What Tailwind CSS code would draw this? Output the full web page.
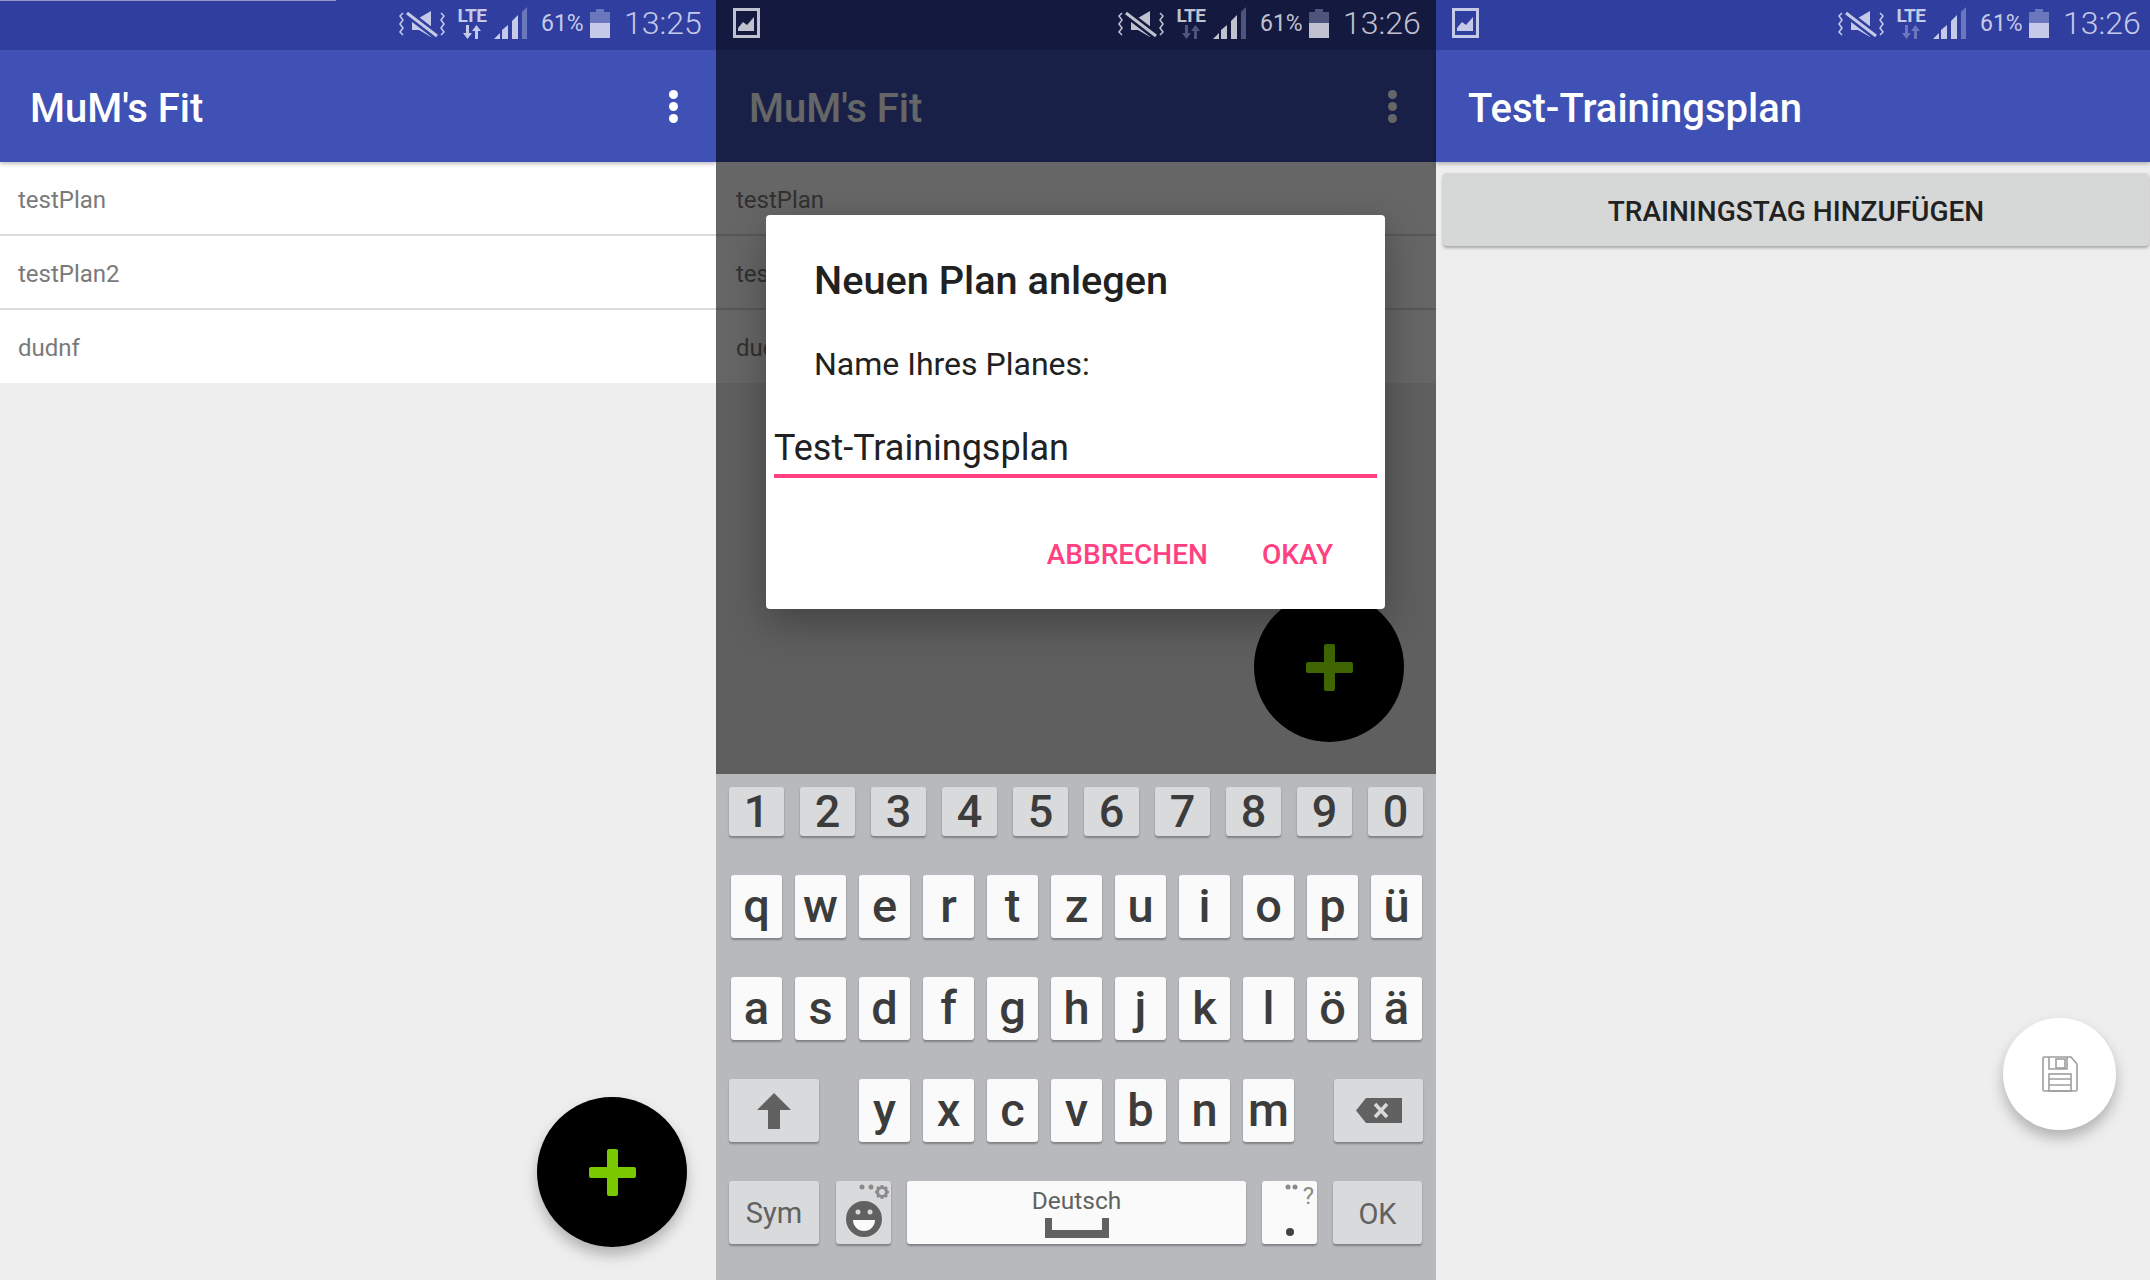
<!DOCTYPE html>
<html lang="en">
<head>
  <meta charset="UTF-8" />
  <title>MuM's Fit</title>
  <script src="https://cdn.jsdelivr.net/npm/@tailwindcss/browser@4"></script>
</head>
<body class="font-['Roboto',sans-serif] bg-[#eeeeee]">
<div class="flex w-[2150px] h-[1280px] overflow-hidden">

  <!-- Screen 1: plan list -->
  <section class="relative flex flex-col w-[716px] shrink-0 bg-[#eeeeee]">
    <div class="absolute top-0 left-0 w-[336px] h-px bg-[#8f97c9]"></div>
    <div data-status data-time="13:25" data-bg="#303f9f" data-arrows="#c5cae9" class="flex items-center justify-end h-[50px] pb-[4px] pr-[14px] bg-[#303f9f] text-[#c5cae9]"></div>
    <header class="relative flex items-center justify-between h-[112px] pl-[30px] pr-[38px] bg-[#3f51b5] shadow-[0_2px_4px_rgba(0,0,0,0.25)]">
      <h1 class="pt-[6px] text-[40px] font-medium text-white leading-none">MuM's Fit</h1>
      <div class="flex flex-col gap-[3px]">
        <span class="w-[9px] h-[9px] rounded-full bg-white"></span>
        <span class="w-[9px] h-[9px] rounded-full bg-white"></span>
        <span class="w-[9px] h-[9px] rounded-full bg-white"></span>
      </div>
    </header>
    <ul class="text-[24px] text-[#7a7a7a] bg-white">
      <li class="flex items-center h-[74px] pt-[4px] pl-[18px] border-b-2 border-[#dcdcdc]">testPlan</li>
      <li class="flex items-center h-[74px] pt-[4px] pl-[18px] border-b-2 border-[#dcdcdc]">testPlan2</li>
      <li class="flex items-center h-[73px] pt-[2px] pl-[18px]">dudnf</li>
    </ul>
    <button class="absolute left-[537px] top-[1097px] flex items-center justify-center w-[150px] h-[150px] rounded-full bg-black shadow-[0_8px_14px_rgba(0,0,0,0.25)]">
      <svg width="47" height="47" viewBox="0 0 47 47"><path fill="#7ac800" d="M18 2a2 2 0 0 1 2-2h7a2 2 0 0 1 2 2v16h16a2 2 0 0 1 2 2v7a2 2 0 0 1-2 2H29v16a2 2 0 0 1-2 2h-7a2 2 0 0 1-2-2V29H2a2 2 0 0 1-2-2v-7a2 2 0 0 1 2-2h16z"/></svg>
    </button>
  </section>

  <!-- Screen 2: new plan dialog with keyboard -->
  <section class="relative flex flex-col w-[720px] shrink-0 bg-[#eeeeee]">
    <div data-status data-time="13:26" data-pic data-bg="#14193f" data-arrows="#4e547c" class="relative z-20 flex items-center justify-end h-[50px] pb-[4px] pl-[17px] pr-[15px] bg-[#14193f] text-[#c0c2d0]"></div>
    <header class="flex items-center justify-between h-[112px] pl-[33px] pr-[39px] bg-[#3f51b5]">
      <h1 class="pt-[6px] text-[40px] font-medium text-white leading-none">MuM's Fit</h1>
      <div class="flex flex-col gap-[3px]">
        <span class="w-[9px] h-[9px] rounded-full bg-white"></span>
        <span class="w-[9px] h-[9px] rounded-full bg-white"></span>
        <span class="w-[9px] h-[9px] rounded-full bg-white"></span>
      </div>
    </header>
    <ul class="text-[24px] text-[#7a7a7a] bg-white">
      <li class="flex items-center h-[74px] pt-[4px] pl-[20px] border-b-2 border-[#dcdcdc]">testPlan</li>
      <li class="flex items-center h-[74px] pt-[4px] pl-[20px] border-b-2 border-[#dcdcdc]">testPlan2</li>
      <li class="flex items-center h-[73px] pt-[2px] pl-[20px]">dudnf</li>
    </ul>
    <div class="flex-1"></div>
    <button class="absolute left-[538px] top-[592px] flex items-center justify-center w-[150px] h-[150px] rounded-full bg-black">
      <svg width="47" height="47" viewBox="0 0 47 47"><path fill="#9fff00" d="M18 2a2 2 0 0 1 2-2h7a2 2 0 0 1 2 2v16h16a2 2 0 0 1 2 2v7a2 2 0 0 1-2 2H29v16a2 2 0 0 1-2 2h-7a2 2 0 0 1-2-2V29H2a2 2 0 0 1-2-2v-7a2 2 0 0 1 2-2h16z"/></svg>
    </button>
    <div class="absolute left-0 top-[50px] w-full h-[724px] bg-black/60"></div>

    <div class="absolute left-[50px] top-[215px] flex flex-col w-[619px] h-[394px] rounded-[4px] bg-white shadow-[0_14px_40px_rgba(0,0,0,0.3)]">
      <h2 class="mt-[46px] ml-[48px] text-[39.7px] font-medium leading-[40px] text-[#212121]">Neuen Plan anlegen</h2>
      <p class="mt-[43px] ml-[48px] text-[32px] leading-[40px] text-[#212121]">Name Ihres Planes:</p>
      <div class="mt-[44px] mx-[8px] pb-[6px] text-[36px] leading-[40px] text-[#212121] border-b-4 border-[#ff4081]">Test-Trainingsplan</div>
      <div class="flex justify-end gap-[54px] mt-[57px] pr-[52px] text-[28px] font-medium leading-[40px] text-[#ff4081]">
        <span>ABBRECHEN</span>
        <span>OKAY</span>
      </div>
    </div>

    <!-- Keyboard -->
    <div class="relative flex flex-col h-[506px] pt-[13px] bg-[#b8b9bd] text-[#3c3c3c]">
      <div data-keys="1234567890" class="flex gap-[16px] h-[49px] ml-[13px]"></div>
      <div data-keys="qwertzuiopü" class="flex gap-[13px] h-[63px] mt-[39px] ml-[15px]"></div>
      <div data-keys="asdfghjklöä" class="flex gap-[13px] h-[63px] mt-[39px] ml-[15px]"></div>
      <div class="flex h-[63px] mt-[39px] ml-[13px]">
        <div class="flex items-center justify-center w-[90px] rounded-[3px] bg-[#d9dadc] shadow-[0_2px_2px_rgba(0,0,0,0.3)]">
          <svg width="34" height="36" viewBox="0 0 34 36"><path fill="#616161" d="M17 0 34 17H23V36H11V17H0z"/></svg>
        </div>
        <div data-keys="yxcvbnm" class="flex gap-[13px] ml-[40px]"></div>
        <div class="flex items-center justify-center w-[89px] ml-[40px] rounded-[3px] bg-[#d9dadc] shadow-[0_2px_2px_rgba(0,0,0,0.3)]">
          <svg width="46" height="25" viewBox="0 0 46 25"><path fill="#616161" d="M10 0H46V25H10L0 12.5z"/><path stroke="#d9dadc" stroke-width="3.5" d="M19 6 31 19M31 6 19 19"/></svg>
        </div>
      </div>
      <div class="flex h-[63px] mt-[39px] ml-[13px]">
        <div class="flex items-center justify-center w-[90px] pt-[3px] text-[29px] text-[#616161] rounded-[3px] bg-[#d9dadc] shadow-[0_2px_2px_rgba(0,0,0,0.3)]">Sym</div>
        <div class="relative w-[55px] ml-[17px] rounded-[3px] bg-[#d9dadc] shadow-[0_2px_2px_rgba(0,0,0,0.3)]">
          <svg class="absolute inset-0" width="55" height="63" viewBox="0 0 55 63">
            <circle cx="28" cy="38" r="18" fill="#616161"/>
            <circle cx="22" cy="31" r="2.5" fill="#d9dadc"/>
            <circle cx="34" cy="31" r="2.5" fill="#d9dadc"/>
            <path fill="#fafafa" d="M17 39H39A11 11 0 0 1 17 39z"/>
            <circle cx="26" cy="6" r="2.5" fill="#8a8a8a"/>
            <circle cx="35" cy="6" r="2.5" fill="#8a8a8a"/>
            <circle cx="46" cy="11" r="4.5" fill="none" stroke="#8a8a8a" stroke-width="3"/>
            <path stroke="#8a8a8a" stroke-width="2.5" d="M46 4V7M46 15V18M39 11H42M50 11H53M41 6 43 8M49 14 51 16M51 6 49 8M43 14 41 16"/>
          </svg>
        </div>
        <div class="relative flex flex-col items-center w-[339px] ml-[16px] rounded-[3px] bg-[#fafafa] shadow-[0_2px_2px_rgba(0,0,0,0.3)] text-[#616161]">
          <span class="mt-[5px] text-[24.5px] leading-[30px]">Deutsch</span>
          <svg class="mt-[2px]" width="64" height="20" viewBox="0 0 64 20"><path fill="#616161" d="M0 0H7V12H57V0H64V20H0z"/></svg>
        </div>
        <div class="relative w-[55px] ml-[16px] rounded-[3px] bg-[#fafafa] shadow-[0_2px_2px_rgba(0,0,0,0.3)]">
          <svg class="absolute inset-0" width="55" height="63" viewBox="0 0 55 63">
            <circle cx="26" cy="6" r="2.5" fill="#8a8a8a"/>
            <circle cx="33" cy="6" r="2.5" fill="#8a8a8a"/>
            <circle cx="28" cy="51" r="4" fill="#424242"/>
          </svg>
          <span class="absolute right-[3px] top-[1px] text-[24px] leading-[28px] text-[#8a8a8a]">?</span>
        </div>
        <div class="flex items-center justify-center w-[89px] ml-[16px] pt-[4px] text-[29px] text-[#616161] rounded-[3px] bg-[#d9dadc] shadow-[0_2px_2px_rgba(0,0,0,0.3)]">OK</div>
      </div>
    </div>
  </section>

  <!-- Screen 3: plan detail -->
  <section class="relative flex flex-col w-[714px] shrink-0 bg-[#eeeeee]">
    <div data-status data-time="13:26" data-pic data-bg="#303f9f" data-arrows="#6b77bd" class="flex items-center justify-end h-[50px] pb-[4px] pl-[16px] pr-[9px] bg-[#303f9f] text-[#c5cae9]"></div>
    <header class="flex items-center h-[112px] pl-[32px] bg-[#3f51b5] shadow-[0_2px_4px_rgba(0,0,0,0.25)]">
      <h1 class="pt-[6px] text-[40px] font-medium text-white leading-none">Test-Trainingsplan</h1>
    </header>
    <button class="flex items-center justify-center h-[73px] mt-[11px] ml-[7px] mr-px pt-[4px] rounded-[4px] bg-[#d6d7d7] text-[28px] font-medium text-[#212121] shadow-[0_2px_3px_rgba(0,0,0,0.3)]">TRAININGSTAG HINZUFÜGEN</button>
    <button class="absolute left-[567px] top-[1018px] flex items-center justify-center w-[113px] h-[112px] rounded-full bg-white shadow-[0_8px_14px_rgba(0,0,0,0.25)]">
      <svg width="36" height="36" viewBox="0 0 36 36" fill="none" stroke="#9e9e9e" stroke-width="1.6">
        <path d="M2 1H29L35 8V34a1 1 0 0 1-1 1H2a1 1 0 0 1-1-1V2a1 1 0 0 1 1-1z"/>
        <path d="M7 1V13H25V1"/>
        <rect x="14" y="3" width="9" height="9"/>
        <rect x="7" y="18" width="22" height="17"/>
        <path d="M7 23H29M7 29H29"/>
      </svg>
    </button>
  </section>
</div>

<script>
  // Key caps for the plain letter and number rows
  document.querySelectorAll('[data-keys]').forEach(row => {
    const isNumbers = row.dataset.keys === '1234567890';
    row.innerHTML = [...row.dataset.keys].map(k => isNumbers
      ? `<div class="flex items-center justify-center w-[55px] rounded-[3px] bg-[#d9dadc] text-[45px] font-medium shadow-[0_2px_2px_rgba(0,0,0,0.3)]">${k}</div>`
      : `<div class="flex items-center justify-center w-[51px] rounded-[3px] bg-[#fafafa] text-[47px] font-medium shadow-[0_2px_2px_rgba(0,0,0,0.3)]">${k}</div>`
    ).join('');
  });

  // Status bar, same on all three screens
  document.querySelectorAll('[data-status]').forEach(bar => {
    const bg = bar.dataset.bg;
    const dim = bar.dataset.arrows === '#c5cae9' ? '#6b77bd' : bar.dataset.arrows;
    const pic = bar.dataset.pic !== undefined
      ? `<svg class="mr-auto" width="27" height="30" viewBox="0 0 27 30"><rect x="1.5" y="1.5" width="24" height="27" fill="none" stroke="currentColor" stroke-width="3"/><path fill="currentColor" d="M5 23V20L10 14 14 17 21 9V23z"/></svg>`
      : '';
    bar.innerHTML = `${pic}
      <svg class="shrink-0 overflow-visible" width="46" height="25" viewBox="0 0 46 25" fill="none">
        <path stroke="currentColor" stroke-width="1.5" d="M4 2 1 5 4 9 1 13 4 17 1 21 4 24M42 2 45 5 42 9 45 13 42 17 45 21 42 24"/>
        <path fill="currentColor" d="M13 7H20L32 0V26L20 19H13z"/>
        <path stroke="${bg}" stroke-width="8" d="M8 2 38 25"/>
        <path stroke="currentColor" stroke-width="3" d="M8 2 38 25"/>
      </svg>
      <div class="flex flex-col items-center w-[32px] ml-[11px]">
        <span class="text-[19px] font-bold leading-[15px] tracking-[-0.5px]">LTE</span>
        <svg class="mt-[2px]" width="18" height="14" viewBox="0 0 18 14" fill="${bar.dataset.arrows}"><path d="M3 0H6V8H9L4.5 14 0 8H3zM13.5 0 18 6H15V14H12V6H9z"/></svg>
      </div>
      <svg class="ml-[6px]" width="33" height="32" viewBox="0 0 33 32" fill="currentColor">
        <path d="M0 32 6 26V32z"/><path d="M8 32V23L14 18V32z"/><path d="M18 32V14L24 8V32z"/><path fill="${dim}" d="M28 32V5L33 0V32z"/>
      </svg>
      <span class="ml-[14px] w-[42px] text-[23px] leading-none whitespace-nowrap">61%</span>
      <svg class="ml-[7px]" width="20" height="29" viewBox="0 0 20 29" fill="${dim}">
        <path d="M6 0H14V3H20V14H0V3H6z"/><path fill="currentColor" d="M0 14H20V29H0z"/>
      </svg>
      <span class="ml-[14px] w-[78px] text-[32px] font-[350] leading-none">${bar.dataset.time}</span>`;
  });
</script>
</body>
</html>
